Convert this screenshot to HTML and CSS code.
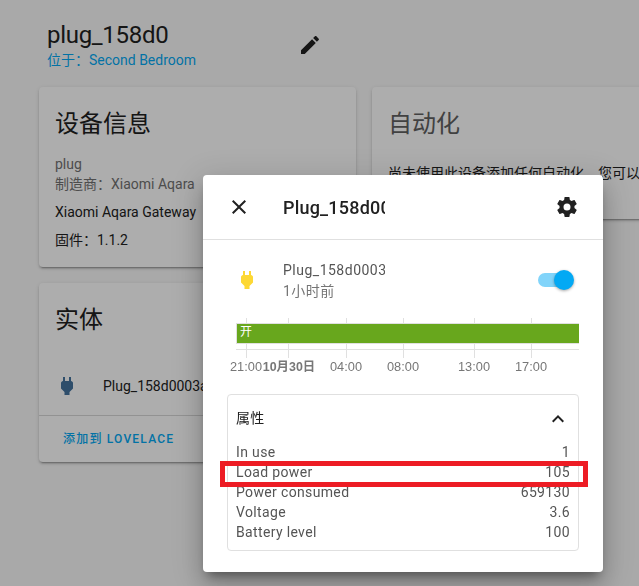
FILE: index.html
```html
<!DOCTYPE html>
<html lang="zh-CN">
  <head>
    <meta charset="UTF-8" />
    <meta name="viewport" content="width=device-width, initial-scale=1.0" />
    <title>plug_158d0</title>
    <link rel="stylesheet" href="styles.css">
  </head>
  <body>
    <div class="page">
      <div class="page-head">
        <div class="page-title">
          <h1 class="device-name">plug_158d0</h1>
          <a class="area-link">位于：Second Bedroom</a>
        </div>
        <svg class="edit-icon" viewBox="0 0 24 24"><path d="M20.71,7.04C21.1,6.65 21.1,6 20.71,5.63L18.37,3.29C18,2.9 17.35,2.9 16.96,3.29L15.12,5.12L18.87,8.87M3,17.25V21H6.75L17.81,9.93L14.06,6.18L3,17.25Z" /></svg>
      </div>

      <div class="columns">
        <div class="column">
          <div class="card">
            <h2 class="card-title">设备信息</h2>
            <div class="info">
              <div class="info-muted">plug</div>
              <div class="info-muted">制造商：Xiaomi Aqara</div>
              <div class="info-line">Xiaomi Aqara Gateway</div>
              <div class="info-line">固件：1.1.2</div>
            </div>
          </div>
          <div class="card">
            <h2 class="card-title">实体</h2>
            <div class="entity">
              <svg class="entity-icon" viewBox="0 0 24 24"><path d="M16,7V3H14V7H10V3H8V7H8C7,7 6,8 6,9V14.5L9.5,18V21H14.5V18L18,14.5V9C18,8 17,7 16,7Z" /></svg>
              <span class="entity-name">Plug_158d0003a1b2c4</span>
            </div>
            <div class="card-actions">
              <a class="action-link">添加到 Lovelace</a>
            </div>
          </div>
        </div>
        <div class="column">
          <div class="card card-auto">
            <h2 class="card-title card-title-light">自动化</h2>
            <p class="auto-text">尚未使用此设备添加任何自动化。您可以以此设备为基础创建自动化</p>
          </div>
        </div>
      </div>
    </div>

    <div class="scrim"></div>

    <div class="dialog">
      <div class="dialog-head">
        <svg class="icon" viewBox="0 0 24 24"><path d="M19,6.41L17.59,5L12,10.59L6.41,5L5,6.41L10.59,12L5,17.59L6.41,19L12,13.41L17.59,19L19,17.59L13.41,12L19,6.41Z" /></svg>
        <div class="dialog-title">Plug_158d0003a1b2c4</div>
        <svg class="icon" viewBox="0 0 24 24"><path d="M12,15.5A3.5,3.5 0 0,1 8.5,12A3.5,3.5 0 0,1 12,8.5A3.5,3.5 0 0,1 15.5,12A3.5,3.5 0 0,1 12,15.5M19.43,12.97C19.47,12.65 19.5,12.33 19.5,12C19.5,11.67 19.47,11.34 19.43,11L21.54,9.37C21.73,9.22 21.78,8.95 21.66,8.73L19.66,5.27C19.54,5.05 19.27,4.96 19.05,5.05L16.56,6.05C16.04,5.66 15.5,5.32 14.87,5.07L14.5,2.42C14.46,2.18 14.25,2 14,2H10C9.75,2 9.54,2.18 9.5,2.42L9.13,5.07C8.5,5.32 7.96,5.66 7.44,6.05L4.95,5.05C4.73,4.96 4.46,5.05 4.34,5.27L2.34,8.73C2.21,8.95 2.27,9.22 2.46,9.37L4.57,11C4.53,11.34 4.5,11.67 4.5,12C4.5,12.33 4.53,12.65 4.57,12.97L2.46,14.63C2.27,14.78 2.21,15.05 2.34,15.27L4.34,18.73C4.46,18.95 4.73,19.03 4.95,18.95L7.44,17.94C7.96,18.34 8.5,18.68 9.13,18.93L9.5,21.58C9.54,21.82 9.75,22 10,22H14C14.25,22 14.46,21.82 14.5,21.58L14.87,18.93C15.5,18.67 16.04,18.34 16.56,17.94L19.05,18.95C19.27,19.03 19.54,18.95 19.66,18.73L21.66,15.27C21.78,15.05 21.73,14.78 21.54,14.63L19.43,12.97Z" /></svg>
      </div>

      <div class="dialog-body">
        <div class="state-row">
          <svg class="state-icon" viewBox="0 0 24 24"><path d="M16,7V3H14V7H10V3H8V7H8C7,7 6,8 6,9V14.5L9.5,18V21H14.5V18L18,14.5V9C18,8 17,7 16,7Z" /></svg>
          <div class="state-text">
            <div class="state-name">Plug_158d0003a1b2c4</div>
            <div class="state-time">1小时前</div>
          </div>
          <div class="toggle"><div class="toggle-knob"></div></div>
        </div>

        <div class="chart">
          <div class="chart-tick" style="left: 10px"></div>
          <div class="chart-tick" style="left: 52px"></div>
          <div class="chart-tick" style="left: 110px"></div>
          <div class="chart-tick" style="left: 167px"></div>
          <div class="chart-tick" style="left: 238px"></div>
          <div class="chart-tick" style="left: 295px"></div>
          <div class="chart-bar">开</div>
          <div class="chart-axis"></div>
          <span class="chart-label" style="left: 10px">21:00</span>
          <span class="chart-label chart-label-bold" style="left: 53px">10月30日</span>
          <span class="chart-label" style="left: 110px">04:00</span>
          <span class="chart-label" style="left: 167px">08:00</span>
          <span class="chart-label" style="left: 238px">13:00</span>
          <span class="chart-label" style="left: 295px">17:00</span>
        </div>

        <div class="attrs">
          <div class="attrs-head">
            <span class="attrs-title">属性</span>
            <svg class="icon" viewBox="0 0 24 24"><path d="M7.41,15.41L12,10.83L16.59,15.41L18,14L12,8L6,14L7.41,15.41Z" /></svg>
          </div>
          <div class="attr-row"><span>In use</span><span>1</span></div>
          <div class="attr-row"><span>Load power</span><span>105</span></div>
          <div class="attr-row"><span>Power consumed</span><span>659130</span></div>
          <div class="attr-row"><span>Voltage</span><span>3.6</span></div>
          <div class="attr-row"><span>Battery level</span><span>100</span></div>
        </div>
      </div>

      <div class="highlight"></div>
    </div>
  </body>
</html>
```

FILE: styles.css
```css
html,
body {
  height: 100%;
}
body {
  margin: 0;
  overflow: hidden;
  background: #fafafa;
  font-family: Roboto, "Noto Sans CJK SC", sans-serif;
  font-size: 14px;
  color: #212121;
}
.page {
  width: 639px;
  height: 586px;
  overflow: hidden;
}
.page-head {
  display: flex;
  align-items: flex-start;
  height: 87px;
  padding-left: 47px;
  box-sizing: border-box;
}
.page-title {
  width: 251px;
  padding-top: 19px;
}
.device-name {
  margin: 0;
  font-size: 24px;
  font-weight: 400;
  line-height: 33px;
  letter-spacing: -0.3px;
}
.area-link {
  display: block;
  line-height: 16px;
  color: #03a9f4;
}
.edit-icon {
  width: 24px;
  height: 24px;
  margin-top: 33px;
  fill: #212121;
}
.columns {
  display: flex;
  gap: 16px;
  padding-left: 39px;
  width: 900px;
}
.column {
  display: flex;
  flex-direction: column;
  gap: 16px;
  width: 317px;
  flex: none;
}
.card {
  background: #fff;
  border-radius: 4px;
  box-shadow: 0 2px 2px rgba(0, 0, 0, 0.14), 0 1px 5px rgba(0, 0, 0, 0.12), 0 3px 1px -2px rgba(0, 0, 0, 0.2);
}
.card-auto {
  width: 400px;
  height: 132px;
  overflow: hidden;
}
.card-title {
  margin: 0;
  padding: 21px 16px 0;
  font-size: 24px;
  font-weight: 400;
  line-height: 32px;
}
.card-title-light {
  color: #616161;
}
.info {
  padding: 14px 16px 16px;
  height: 97px;
}
.info-muted {
  line-height: 20px;
  color: #727272;
}
.info-line {
  margin-top: 8px;
  line-height: 20px;
}
.entity {
  display: flex;
  align-items: center;
  height: 48px;
  margin-top: 26px;
  padding: 0 16px 0 16px;
}
.entity-icon {
  width: 24px;
  height: 24px;
  fill: #44739e;
}
.entity-name {
  margin-left: 24px;
  white-space: nowrap;
}
.card-actions {
  margin-top: 5px;
  padding: 0 24px;
  height: 46px;
  line-height: 44px;
  border-top: 1px solid #d8d8d8;
}
.action-link {
  font-size: 12px;
  font-weight: 500;
  letter-spacing: 1.2px;
  text-transform: uppercase;
  color: #03a9f4;
}
.auto-text {
  margin: 0;
  padding: 0 16px;
  margin-top: 23px;
  line-height: 20px;
  white-space: nowrap;
}
.scrim {
  position: fixed;
  inset: 0;
  background: rgba(0, 0, 0, 0.32);
}
.dialog {
  position: absolute;
  left: 203px;
  top: 175px;
  width: 400px;
  height: 397px;
  background: #fff;
  border-radius: 4px;
  box-shadow: 0 16px 24px 2px rgba(0, 0, 0, 0.14), 0 6px 30px 5px rgba(0, 0, 0, 0.12), 0 8px 10px -5px rgba(0, 0, 0, 0.4);
}
.dialog-head {
  display: flex;
  align-items: center;
  justify-content: space-between;
  height: 64px;
  padding: 0 24px;
  border-bottom: 1px solid #e0e0e0;
}
.icon {
  width: 24px;
  height: 24px;
  flex: none;
  fill: #212121;
}
.dialog-title {
  width: 102px;
  margin-right: auto;
  margin-left: 32px;
  overflow: hidden;
  white-space: nowrap;
  font-size: 18px;
  font-weight: 500;
  letter-spacing: 0.2px;
}
.dialog-body {
  padding: 20px 24px 0;
}
.state-row {
  display: flex;
  align-items: flex-start;
  height: 41px;
}
.state-icon {
  width: 24px;
  height: 24px;
  margin-top: 8px;
  margin-left: 8px;
  fill: #fdd835;
}
.state-text {
  width: 102px;
  margin-left: 24px;
  overflow: hidden;
  white-space: nowrap;
  letter-spacing: 0.5px;
}
.state-name {
  line-height: 20px;
  color: #555;
}
.state-time {
  line-height: 20px;
  margin-top: 1px;
  color: #757575;
}
.toggle {
  position: relative;
  width: 32px;
  height: 14px;
  margin-top: 13px;
  margin-left: auto;
  margin-right: 9px;
  border-radius: 7px;
  background: #81d4fa;
}
.toggle-knob {
  position: absolute;
  right: -4px;
  top: -3px;
  width: 20px;
  height: 20px;
  border-radius: 50%;
  background: #03a9f4;
  box-shadow: 0 1px 3px rgba(0, 0, 0, 0.35);
}
.chart {
  position: relative;
  height: 60px;
  margin: 17px 0 16px 9px;
  font-family: "Liberation Sans", Arial, "Noto Sans CJK SC", sans-serif;
}
.chart-tick {
  position: absolute;
  top: 0;
  width: 1px;
  height: 40px;
  background: #e0e0e0;
}
.chart-bar {
  position: absolute;
  top: 5px;
  left: 0;
  right: 0;
  height: 19px;
  padding-left: 3px;
  border: 1px solid #e0e0e0;
  border-right: 0;
  background: #68a71d;
  color: #fff;
  font-size: 12px;
  line-height: 16px;
}
.chart-axis {
  position: absolute;
  top: 31px;
  left: 0;
  right: 0;
  height: 1px;
  background: #e0e0e0;
}
.chart-label {
  position: absolute;
  top: 42px;
  transform: translateX(-50%);
  font-size: 12.8px;
  line-height: 14px;
  white-space: nowrap;
  color: #777;
}
.chart-label-bold {
  font-size: 12.4px;
  font-weight: 700;
}
.attrs {
  height: 155px;
  border: 1px solid #e0e0e0;
  border-radius: 4px;
  padding: 0 8px;
  letter-spacing: 0.35px;
}
.attrs-head {
  display: flex;
  align-items: center;
  justify-content: space-between;
  height: 47px;
}
.attrs-title {
  padding-bottom: 3px;
}
.attr-row {
  display: flex;
  justify-content: space-between;
  line-height: 20px;
  color: #555;
}
.highlight {
  position: absolute;
  left: 17px;
  top: 286px;
  width: 368px;
  height: 26px;
  box-sizing: border-box;
  border: 5px solid #ed1c24;
}
```
